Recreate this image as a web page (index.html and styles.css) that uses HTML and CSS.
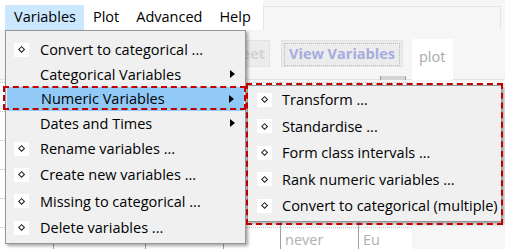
FILE: index.html
```html
<!DOCTYPE html>
<html lang="en">
<head>
  <meta charset="UTF-8">
  <meta name="viewport" content="width=device-width, initial-scale=1.0">
  <title>Variables menu</title>
  <link rel="stylesheet" href="styles.css">
</head>
<body>
  <div class="app">
    <div class="topbar">
      <ul class="menubar">
        <li class="open">Variables</li>
        <li>Plot</li>
        <li>Advanced</li>
        <li>Help</li>
      </ul>
      <div class="frame"></div>
    </div>

    <div class="toolbar">
      <span class="btn"><span>Sheet</span></span>
      <span class="btn focus"><span>View Variables</span></span>
      <span class="tab">plot</span>
      <span class="thumb"></span>
    </div>

    <div class="sheet">
      <div class="row"><span class="cell"></span><span class="cell"></span><span class="cell"></span><span class="cell"></span><span class="cell"></span><span class="cell"></span></div>
      <div class="row"><span class="cell"></span><span class="cell"></span><span class="cell"></span><span class="cell"></span><span class="cell"></span><span class="cell"></span></div>
      <div class="row"><span class="cell"></span><span class="cell"></span><span class="cell"></span><span class="cell"></span><span class="cell"></span><span class="cell"></span></div>
      <div class="row"><span class="cell"></span><span class="cell"></span><span class="cell"></span><span class="cell"></span><span class="cell"></span><span class="cell"></span></div>
      <div class="row"><span class="cell"></span><span class="cell"></span><span class="cell"></span><span class="cell"></span><span class="cell"></span><span class="cell"></span></div>
      <div class="row last"><span class="cell"></span><span class="cell"></span><span class="cell"></span><span class="cell"></span><span class="cell">never</span><span class="cell">Eu</span></div>
    </div>
  </div>

  <ul class="menu main">
    <li><span class="ico"></span>Convert to categorical ...</li>
    <li><span></span>Categorical Variables<span class="arrow"></span></li>
    <li class="active"><span></span>Numeric Variables<span class="arrow"></span></li>
    <li><span></span>Dates and Times<span class="arrow"></span></li>
    <li><span class="ico"></span>Rename variables ...</li>
    <li><span class="ico"></span>Create new variables ...</li>
    <li><span class="ico"></span>Missing to categorical ...</li>
    <li><span class="ico"></span>Delete variables ...</li>
  </ul>

  <ul class="menu sub">
    <li><span class="ico"></span>Transform ...</li>
    <li><span class="ico"></span>Standardise ...</li>
    <li><span class="ico"></span>Form class intervals ...</li>
    <li><span class="ico"></span>Rank numeric variables ...</li>
    <li><span class="ico"></span>Convert to categorical (multiple)</li>
  </ul>

  <!-- red annotation boxes -->
  <div class="mark mark-item"></div>
  <div class="mark mark-sub"></div>
</body>
</html>
```

FILE: styles.css
```css
body {
  margin: 0;
  width: 505px;
  height: 249px;
  overflow: hidden;
  background-color: #f6f6f6;
  font-family: "Open Sans", "Noto Sans", sans-serif;
  font-size: 14.5px;
  color: #000;
  position: relative;
}
ul {
  list-style: none;
  margin: 0;
  padding: 0;
}

/* window behind the menus */
.topbar {
  display: flex;
  height: 30px;
}
.menubar {
  display: flex;
  width: 263px;
  padding: 5px 0 0 5px;
  box-sizing: border-box;
  background-color: #fff;
}
.menubar li {
  height: 25px;
  line-height: 24px;
  padding: 0 8px 0 9px;
}
.menubar .open {
  background-color: #cce8ff;
}
.frame {
  flex: 1;
  margin: 6px 4px 0 0;
  border: 1px solid #e6e6e6;
  border-bottom: none;
}
.toolbar {
  position: relative;
  display: flex;
  align-items: flex-start;
  height: 50px;
  padding: 9px 0 0 240px;
  box-sizing: border-box;
  border-bottom: 1px solid #e2e2e2;
}
.btn {
  display: flex;
  justify-content: flex-end;
  overflow: hidden;
  width: 30px;
  height: 27px;
  margin-top: 1px;
  box-sizing: border-box;
  border: 1px solid #e2e2e2;
  background-color: #ececec;
  color: #d2d2d2;
  font-weight: bold;
  padding-right: 4px;
  line-height: 25px;
}
.btn.focus {
  display: block;
  width: 122px;
  margin-left: 11px;
  padding: 2px;
  text-align: center;
  color: #a7acdf;
}
.btn.focus span {
  display: block;
  height: 21px;
  line-height: 20px;
  border: 1px dotted #b9b9b9;
}
.tab {
  width: 41px;
  height: 41px;
  margin-left: 9px;
  box-sizing: border-box;
  background-color: #fff;
  color: #a9a9a9;
  padding: 8px 0 0 7px;
  line-height: 20px;
}
.thumb {
  position: absolute;
  left: 380px;
  bottom: -1px;
  width: 24px;
  height: 4px;
  background-color: #d4d4d4;
  border-left: 1px solid #9c9c9c;
  border-right: 1px solid #9c9c9c;
}
.sheet {
  margin-top: 2px;
}
.row {
  display: grid;
  grid-template-columns: 53px 92px 78px 57px 78px 54px;
  height: 29px;
}
.row.last {
  height: 22px;
}
.cell {
  border-left: 1px solid #a0a0a0;
  border-top: 1px dotted #c4c4c4;
  background-color: #fff;
  padding: 2px 0 0 4px;
  line-height: 20px;
  color: #b0b0b0;
  white-space: nowrap;
  overflow: hidden;
}
.cell:first-child {
  border-left: none;
}

/* popup menus */
.menu {
  position: absolute;
  display: grid;
  box-sizing: border-box;
  background-color: #f0f0f0;
  border: 1px solid #979797;
  box-shadow: 2px 2px 3px rgba(0, 0, 0, 0.35);
  white-space: nowrap;
}
.menu li {
  display: grid;
  grid-template-columns: 15px 1fr auto;
  column-gap: 11px;
  align-items: center;
  padding: 0 10px 0 8px;
}
.menu .active {
  margin: 0 1px;
  background-color: #91c9f7;
}
.main {
  left: 5px;
  top: 30px;
  width: 241px;
  height: 214px;
  padding-top: 6.5px;
  align-content: start;
  grid-template-rows: repeat(4, 24.5px) repeat(4, 26.3px);
}
.sub {
  left: 247px;
  top: 84.5px;
  width: 255px;
  padding: 1px 0 2px;
  grid-template-rows: repeat(5, 26.5px);
}
.sub li {
  padding-left: 9px;
  column-gap: 10px;
}
.ico {
  width: 15px;
  height: 14px;
  background-color: #fff;
  display: flex;
  align-items: center;
  justify-content: center;
}
.ico::after {
  content: "";
  width: 3.2px;
  height: 3.2px;
  border: 1.9px solid #1a1a1a;
  transform: rotate(45deg);
}
.arrow {
  width: 0;
  height: 0;
  border-left: 5px solid #000;
  border-top: 4px solid transparent;
  border-bottom: 4px solid transparent;
}

.mark {
  position: absolute;
  box-sizing: border-box;
  border: 2.5px dashed #c00000;
}
.mark-item {
  left: 3px;
  top: 86px;
  width: 243px;
  height: 24px;
}
.mark-sub {
  left: 246px;
  top: 83px;
  width: 257px;
  height: 142px;
}
```
